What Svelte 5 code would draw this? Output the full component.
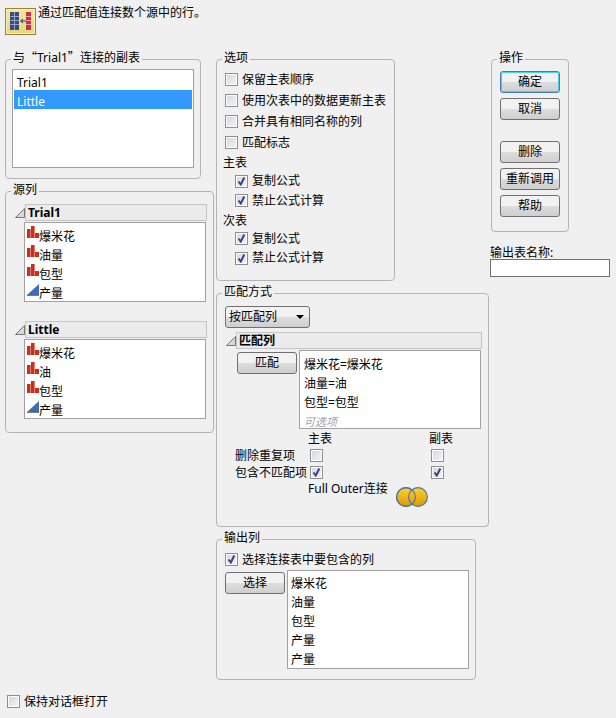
<script>
  const options = ['保留主表顺序', '使用次表中的数据更新主表', '合并具有相同名称的列', '匹配标志'];
  const subOptions = ['复制公式', '禁止公式计算'];
  const sources = [
    { name: 'Trial1', cols: [['爆米花', 'bar'], ['油量', 'bar'], ['包型', 'bar'], ['产量', 'tri']] },
    { name: 'Little', cols: [['爆米花', 'bar'], ['油', 'bar'], ['包型', 'bar'], ['产量', 'tri']] }
  ];
  const matches = ['爆米花=爆米花', '油量=油', '包型=包型'];
  const outputs = ['爆米花', '油量', '包型', '产量', '产量'];
</script>

{#snippet box(on)}
  <span class="box">
    {#if on}
      <svg width="9" height="9" viewBox="0 0 9 9"><path d="M1.5 4.5 L3.8 7.5 L7.3 0.5" fill="none" stroke="#3a3f8f" stroke-width="2"/></svg>
    {/if}
  </span>
{/snippet}

{#snippet check(text, on, cls = '')}
  <div class="check {cls}">{@render box(on)}<span>{text}</span></div>
{/snippet}

{#snippet outline(title)}
  <div class="outline">
    <svg width="10" height="10" viewBox="0 0 10 10"><path d="M0.5 9.5 L9.5 9.5 L9.5 0.5 Z" fill="#d8d8d8" stroke="#777"/></svg>
    <div class="outline-title">{title}</div>
  </div>
{/snippet}

<div class="page">
  <header class="intro">
    <div class="tile">
      <svg width="25" height="19" viewBox="0 0 25 19">
        <rect x="0" y="0" width="9" height="18" fill="#3b4a78"/>
        <path d="M0.5 4.5H9M0.5 8.5H9M0.5 12.5H9M4.5 0V18" stroke="#9aa6c4"/>
        <rect x="16" y="0" width="5" height="18" fill="#c8304a"/>
        <path d="M16 4.5H21M16 8.5H21M16 12.5H21" stroke="#eda0a8"/>
        <path d="M16 9H11M13 7L10.5 9L13 11" fill="none" stroke="#26306a"/>
      </svg>
    </div>
    <p>通过匹配值连接数个源中的行。</p>
  </header>

  <main class="columns">
    <div class="col-left">
      <fieldset class="tables">
        <legend>与<span class="cjk">“</span>Trial1<span class="cjk">”</span>连接的副表</legend>
        <div class="body">
          <div class="list table-list">
            <div class="row">Trial1</div>
            <div class="row selected">Little</div>
          </div>
        </div>
      </fieldset>

      <fieldset class="sources">
        <legend>源列</legend>
        <div class="body">
          {#each sources as source}
            <section class="source">
              {@render outline(source.name)}
              <div class="list col-list">
                {#each source.cols as [label, kind]}
                  <div class="row col-row">
                    {#if kind === 'bar'}
                      <svg class="bars" width="12" height="12" viewBox="0 0 12 12" fill="#c9301c"><rect y="3" width="3.6" height="9"/><rect x="4" width="3.6" height="12"/><rect x="8" y="7" width="4" height="5"/></svg>
                    {:else}
                      <svg width="12" height="12" viewBox="0 0 12 12"><path d="M0 11L12 0V11Z" fill="#3a6cb8"/><path d="M0 11.5H12" stroke="#777"/></svg>
                    {/if}
                    <span>{label}</span>
                  </div>
                {/each}
              </div>
            </section>
          {/each}
        </div>
      </fieldset>
    </div>

    <div class="col-mid">
      <fieldset class="options">
        <legend>选项</legend>
        <div class="body">
          {#each options as option}
            {@render check(option, false)}
          {/each}
          <div class="sub-label">主表</div>
          {#each subOptions as option}
            {@render check(option, true, 'indent')}
          {/each}
          <div class="sub-label">次表</div>
          {#each subOptions as option}
            {@render check(option, true, 'indent')}
          {/each}
        </div>
      </fieldset>

      <fieldset class="matching">
        <legend>匹配方式</legend>
        <div class="body">
          <div class="select"><span>按匹配列</span><i></i></div>
          {@render outline('匹配列')}
          <div class="pair match-pair">
            <button class="btn">匹配</button>
            <div class="list match-list">
              {#each matches as match}
                <div class="row">{match}</div>
              {/each}
              <div class="row optional">可选项</div>
            </div>
          </div>
          <div class="join">
            <span></span><span>主表</span><span>副表</span>
            <span>删除重复项</span>
            <span class="cell">{@render box(false)}</span>
            <span class="cell">{@render box(false)}</span>
            <span>包含不匹配项</span>
            <span class="cell">{@render box(true)}</span>
            <span class="cell">{@render box(true)}</span>
          </div>
          <div class="join-kind">
            <span>Full Outer连接</span>
            <svg width="32" height="20" viewBox="0 0 32 20">
              <defs>
                <linearGradient id="gold" x1="0" y1="0" x2="0" y2="1">
                  <stop offset="0" stop-color="#ffd02e"/>
                  <stop offset="1" stop-color="#d99a08"/>
                </linearGradient>
              </defs>
              <circle cx="10" cy="10" r="9.4" fill="url(#gold)" stroke="#4a78a8" stroke-width="1.2"/>
              <circle cx="22" cy="10" r="9.4" fill="url(#gold)" stroke="#4a78a8" stroke-width="1.2"/>
              <circle cx="10" cy="10" r="9.4" fill="none" stroke="#4a78a8" stroke-width="1.2"/>
            </svg>
          </div>
        </div>
      </fieldset>

      <fieldset class="output">
        <legend>输出列</legend>
        <div class="body">
          {@render check('选择连接表中要包含的列', true)}
          <div class="pair output-pair">
            <button class="btn">选择</button>
            <div class="list output-list">
              {#each outputs as output}
                <div class="row">{output}</div>
              {/each}
            </div>
          </div>
        </div>
      </fieldset>
    </div>

    <div class="col-right">
      <fieldset class="actions">
        <legend>操作</legend>
        <div class="body">
          <button class="btn default">确定</button>
          <button class="btn">取消</button>
          <button class="btn spaced">删除</button>
          <button class="btn">重新调用</button>
          <button class="btn">帮助</button>
        </div>
      </fieldset>
      <label class="table-name">
        <span>输出表名称:</span>
        <input type="text" />
      </label>
    </div>
  </main>

  <footer class="keep">
    {@render check('保持对话框打开', false)}
  </footer>
</div>

<style>
  :global(body) {
    background: #f0f0f0;
  }
  .page {
    height: 718px;
    overflow: hidden;
    padding: 8px 0 0 5px;
    box-sizing: border-box;
    color: #000;
    font: 12px/14px "Noto Sans", "Noto Sans CJK SC", sans-serif;
  }
  .page :global(*) {
    box-sizing: border-box;
  }
  .cjk {
    font-family: "Noto Sans CJK SC", sans-serif;
    line-height: 1;
  }
  .intro {
    display: flex;
    gap: 2px;
  }
  .intro p {
    margin: -3px 0 0;
    line-height: 16px;
  }
  .tile {
    width: 31px;
    height: 27px;
    padding: 3px 0 0 4px;
    border: 1px solid #a67c3e;
    box-shadow: inset 0 0 0 1px #f6f1c0;
    background: linear-gradient(#f0e998, #e2d97a);
  }
  .tile svg {
    display: block;
  }
  .columns {
    display: flex;
    margin-top: 16px;
  }
  .col-left {
    width: 211px;
    flex: none;
  }
  .col-mid {
    width: 275px;
    flex: none;
  }
  .col-right {
    width: 120px;
    flex: none;
  }
  fieldset {
    margin: 0;
    padding: 0;
    min-width: 0;
    border: 1px solid #b4b4b4;
    border-radius: 4px;
  }
  legend {
    height: 16px;
    margin-left: 5px;
    padding: 0 2px 2px;
    line-height: 14px;
    white-space: nowrap;
  }
  .tables {
    width: 196px;
  }
  .tables .body {
    padding: 2px 6px 10px;
  }
  .sources {
    width: 209px;
    margin-top: 4px;
  }
  .sources .body {
    padding: 5px 6px 13px 9px;
  }
  .list {
    background: #fff;
    border: 1px solid #a0a0a0;
    padding: 1px;
  }
  .row {
    height: 19px;
    padding: 2px 0 0 3px;
    line-height: 19px;
    white-space: nowrap;
  }
  .selected {
    background: #3399ff;
    color: #fff;
  }
  .table-list {
    height: 99px;
  }
  .source + .source {
    margin-top: 19px;
  }
  .outline {
    display: flex;
    align-items: center;
    height: 17px;
  }
  .outline svg {
    flex: none;
  }
  .outline-title {
    flex: 1;
    height: 17px;
    padding-left: 2px;
    border: 1px solid #c4c4c4;
    background: #ebebeb;
    font-weight: 700;
    line-height: 16px;
  }
  .col-list {
    width: 182px;
    height: 80px;
    margin: 1px 0 0 9px;
    padding-top: 2px;
    overflow: hidden;
  }
  .col-row {
    display: flex;
    align-items: flex-start;
    padding-left: 1px;
  }
  .col-row svg {
    flex: none;
  }
  .col-row .bars {
    margin-top: -1px;
  }
  .col-row span {
    line-height: 19px;
  }
  .options {
    width: 179px;
  }
  .options .body {
    padding: 2px 0 12px 8px;
  }
  .check {
    display: flex;
    align-items: center;
    gap: 4px;
    height: 21px;
    white-space: nowrap;
  }
  .indent {
    height: 19.5px;
    margin-left: 10px;
  }
  .box {
    display: block;
    flex: none;
    width: 13px;
    height: 13px;
    padding: 1px;
    border: 1px solid #8e8f8f;
    background: linear-gradient(135deg, #d4d6da, #f4f5f6);
    box-shadow: inset 0 0 0 1px #fff;
  }
  .box svg {
    display: block;
  }
  .sub-label {
    height: 18.5px;
    margin-left: -2px;
    line-height: 20px;
  }
  .matching {
    width: 273px;
    height: 242px;
    margin-top: 4px;
  }
  .matching .body {
    padding: 5px 6px 0 8px;
  }
  .matching :global(.outline) {
    margin: 4px 0 0 1px;
  }
  .select {
    display: flex;
    align-items: center;
    justify-content: space-between;
    width: 85px;
    height: 22px;
    padding: 0 5px 0 3px;
    border: 1px solid #707070;
    border-radius: 3px;
    background: linear-gradient(#f2f2f2 0 50%, #dddddd 50%, #cfcfcf);
  }
  .select i {
    border: 4px solid transparent;
    border-top: 4px solid #000;
    border-bottom: 0;
  }
  .btn {
    display: block;
    width: 60px;
    height: 22px;
    flex: none;
    padding: 0;
    color: #000;
    font: inherit;
    border: 1px solid #707070;
    border-radius: 3px;
    background: linear-gradient(#f2f2f2 0 50%, #dddddd 50%, #cfcfcf);
  }
  .default {
    border-color: #3c7fb1;
    box-shadow: inset 0 0 0 1px #48d1f5;
  }
  .pair {
    display: flex;
    gap: 2px;
  }
  .match-pair {
    margin: 1px 0 0 12px;
  }
  .match-pair .btn {
    margin-top: 2px;
  }
  .match-list {
    width: 182px;
    height: 79px;
    padding-top: 2px;
  }
  .optional {
    color: #a0a0a0;
    font-style: italic;
    font-size: 11px;
  }
  .join {
    display: grid;
    grid-template-columns: 73px 121px 40px;
    grid-template-rows: 16px 17px 17px;
    margin: 2px 0 0 10px;
    align-items: center;
    white-space: nowrap;
  }
  .cell {
    padding-left: 2px;
  }
  .join-kind {
    display: flex;
    gap: 8px;
    height: 26px;
    margin-left: 83px;
    line-height: 16px;
  }
  .join-kind svg {
    margin-top: 6px;
  }
  .output {
    width: 260px;
    margin-top: 4px;
  }
  .output .body {
    padding: 2px 6px 10px 8px;
  }
  .output-pair .btn {
    margin-top: 2px;
  }
  .output-list {
    width: 182px;
    height: 99px;
  }
  .output-list .row {
    padding-left: 2px;
  }
  .actions {
    width: 78px;
  }
  .actions .body {
    padding: 4px 8px 14px;
  }
  .actions .btn + .btn {
    margin-top: 5px;
  }
  .actions .btn.spaced {
    margin-top: 21px;
  }
  .table-name {
    display: block;
    margin: 14px 0 0 -1px;
  }
  .table-name span {
    display: block;
    line-height: 13px;
  }
  .table-name input {
    display: block;
    width: 120px;
    height: 18px;
    padding: 0;
    border: 1px solid #707070;
    border-radius: 0;
    background: #fff;
  }
  .keep {
    margin: 11px 0 0 2px;
  }
</style>
